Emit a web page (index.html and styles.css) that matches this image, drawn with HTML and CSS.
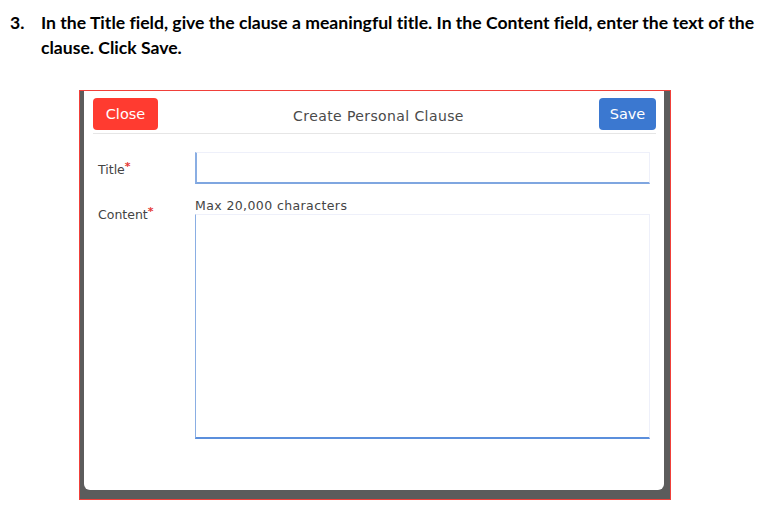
FILE: index.html
```html
<!DOCTYPE html>
<html lang="en">
<head>
    <meta charset="UTF-8">
    <title>Create Personal Clause</title>
    <link rel="stylesheet" href="styles.css">
</head>
<body>
<div class="step">
    <span class="step-num">3.</span>
    <p class="step-text">In the Title field, give the clause a meaningful title. In the Content field, enter the text of the clause. Click Save.</p>
</div>

<div class="shot">
    <div class="modal">
        <div class="modal-header">
            <button class="btn btn-close">Close</button>
            <span class="modal-title">Create Personal Clause</span>
            <button class="btn btn-save">Save</button>
        </div>
        <div class="modal-body">
            <div class="row">
                <label class="field-label" for="title">Title<span class="req">*</span></label>
                <div class="field">
                    <input type="text" id="title" class="input">
                </div>
            </div>
            <div class="row row-content">
                <label class="field-label" for="content">Content<span class="req">*</span></label>
                <div class="field">
                    <div class="hint">Max 20,000 characters</div>
                    <textarea id="content" class="textarea"></textarea>
                </div>
            </div>
        </div>
    </div>
</div>
</body>
</html>
```

FILE: styles.css
```css
body {
    margin: 0;
    background: #fff;
    font-family: "Open Sans", sans-serif;
    color: #000;
}
.step {
    display: flex;
    padding: 10px 0 0 10px;
    font-family: Lato, sans-serif;
    font-weight: 700;
    font-size: 17.6px;
    line-height: 25px;
    font-variant-ligatures: none;
}
.step-num {
    width: 31px;
    flex: none;
}
.step-text {
    margin: 0;
    width: 725px;
}
.shot {
    margin: 30px 0 0 79px;
    width: 580px;
    border: 1px solid #f0403a;
    background: #5c5c5c;
    padding: 0 6px 9px 4px;
}
.modal {
    background: #fff;
    height: 392px;
    border-radius: 0 0 6px 6px;
    padding: 7px 8px 0 9px;
    font-family: "DejaVu Sans", sans-serif;
    color: #444;
}
.modal-header {
    display: flex;
    align-items: center;
    justify-content: space-between;
    padding-bottom: 3px;
    border-bottom: 1px solid #e6e6e6;
}
.btn {
    height: 32px;
    border: none;
    border-radius: 4px;
    color: #fff;
    font-family: "DejaVu Sans", sans-serif;
    font-size: 14.5px;
    padding: 0;
}
.btn-close {
    width: 65px;
    background: #ff3b30;
}
.btn-save {
    width: 57px;
    background: #3b78d0;
}
.modal-title {
    font-size: 14px;
    color: #4a4a4a;
    letter-spacing: 0.4px;
    padding-top: 4px;
}
.modal-body {
    padding: 18px 6px 0 5px;
}
.row {
    display: flex;
}
.field-label {
    width: 97px;
    flex: none;
    font-size: 12.5px;
    color: #444;
    padding-top: 10px;
}
.req {
    color: #e53935;
    font-size: 11px;
    font-weight: 700;
    vertical-align: top;
    position: relative;
    top: -2px;
}
.field {
    flex: 1;
}
.input {
    display: block;
    box-sizing: border-box;
    width: 100%;
    height: 32px;
    margin: 0;
    border: 1px solid #eef0fa;
    border-bottom: 2px solid #7fa6e0;
    border-left: 2px solid #8aaee3;
    outline: none;
}
.row-content {
    margin-top: 14px;
}
.row-content .field-label {
    padding-top: 9px;
}
.hint {
    font-size: 12.5px;
    color: #444;
    line-height: 16px;
    letter-spacing: 0.4px;
}
.textarea {
    display: block;
    box-sizing: border-box;
    width: 100%;
    height: 225px;
    margin: 0;
    resize: none;
    border: 1px solid #eef0fa;
    border-bottom: 2px solid #5b8fdc;
    border-left: 1px solid #8aaee3;
    outline: none;
}
```
